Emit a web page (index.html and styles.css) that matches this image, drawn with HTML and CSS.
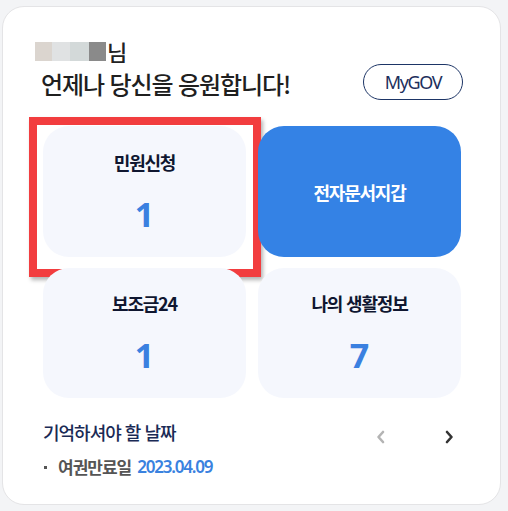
FILE: index.html
```html
<!DOCTYPE html>
<html lang="ko">
<head>
<meta charset="utf-8">
<link rel="stylesheet" href="styles.css">
</head>
<body>
<div class="card">
  <div class="name-row">
    <span class="blur b1"></span><span class="blur b2"></span><span class="blur b3"></span><span class="blur b4"></span><span class="nim">님</span>
  </div>
  <div class="title-row">
    <h2 class="title">언제나 당신을 응원합니다!</h2>
    <a class="mygov">MyGOV</a>
  </div>
  <div class="grid">
    <div class="tile light highlight-wrap">
      <div class="label">민원신청</div>
      <div class="num">1</div>
      <div class="highlight"></div>
    </div>
    <div class="tile blue">
      <div class="label">전자문서지갑</div>
    </div>
    <div class="tile light">
      <div class="label">보조금24</div>
      <div class="num">1</div>
    </div>
    <div class="tile light">
      <div class="label">나의 생활정보</div>
      <div class="num">7</div>
    </div>
  </div>
  <div class="dates">
    <div class="dates-text">
      <div class="dates-title">기억하셔야 할 날짜</div>
      <div class="date-item"><span class="dot"></span><span class="date-label">여권만료일</span><span class="date-val">2023.04.09</span></div>
    </div>
    <div class="arrows">
      <svg class="arrow prev" width="12" height="14" viewBox="0 0 12 14"><path d="M8 2 L3.5 7 L8 12" fill="none" stroke="#b4b4b4" stroke-width="2.6" stroke-linecap="round" stroke-linejoin="round"/></svg>
      <svg class="arrow next" width="12" height="14" viewBox="0 0 12 14"><path d="M4 2 L8.5 7 L4 12" fill="none" stroke="#333" stroke-width="2.6" stroke-linecap="round" stroke-linejoin="round"/></svg>
    </div>
  </div>
</div>
</body>
</html>
```

FILE: styles.css
```css
* { box-sizing: border-box; margin: 0; padding: 0; }
html, body { background: #f3f4f6; }
body {
  font-family: "Noto Sans CJK KR", "Noto Sans", sans-serif;
  padding: 6px 0 0 2px;
  width: 508px;
  height: 511px;
  overflow: hidden;
}
.card {
  width: 499px;
  height: 499px;
  background: #fff;
  border: 1px solid #e4e4e6;
  border-radius: 22px;
  padding: 34px 39px 0 40px;
}
.name-row {
  display: flex;
  align-items: center;
  height: 20px;
  margin-left: -8px;
}
.blur { display: inline-block; width: 17px; height: 19px; }
.b1 { background: #dbd5cf; }
.b2 { background: #e0e2e3; width: 18px; }
.b3 { background: #d3d9d9; width: 19px; }
.b4 { background: #8a8a8a; }
.nim {
  font-size: 22px;
  color: #222;
  margin-left: 1px;
  font-weight: 500;
  line-height: 20px;
}
.title-row {
  display: flex;
  justify-content: space-between;
  align-items: center;
  margin-top: 3px;
  height: 36px;
}
.title {
  font-size: 24px;
  font-weight: 500;
  color: #1f1f1f;
  letter-spacing: -1.1px;
  margin-left: -2px;
  margin-top: 2px;
}
.mygov {
  width: 100px;
  height: 36px;
  border: 1.3px solid #1d3566;
  border-radius: 18px;
  display: flex;
  align-items: center;
  justify-content: center;
  font-family: "Noto Sans", sans-serif;
  font-size: 18px;
  color: #1d2f5c;
  letter-spacing: -1.4px;
  margin-right: -2px;
}
.grid {
  display: grid;
  grid-template-columns: 203px 203px;
  grid-template-rows: 131px 130px;
  column-gap: 12px;
  row-gap: 11px;
  margin-top: 26px;
}
.tile {
  border-radius: 26px;
  display: flex;
  flex-direction: column;
  align-items: center;
  justify-content: center;
  position: relative;
}
.light { background: #f5f7fd; }
.blue { background: #3482e5; }
.label {
  font-size: 18px;
  font-weight: 700;
  color: #0f1630;
  letter-spacing: -1.2px;
  line-height: 20px;
}
.blue .label { color: #fff; }
.num {
  font-family: "Noto Sans", sans-serif;
  font-size: 34px;
  font-weight: 700;
  color: #3a80e0;
  line-height: 36px;
  margin-top: 24px;
}
.highlight {
  position: absolute;
  left: -14px;
  top: -9px;
  width: 232px;
  height: 160px;
  border: 8px solid #f23d3f;
  box-shadow: 2px 3px 4px rgba(0,0,0,0.3);
  pointer-events: none;
}
.dates {
  display: flex;
  justify-content: space-between;
  align-items: flex-start;
  margin-top: 22px;
}
.dates-title {
  font-size: 18px;
  font-weight: 500;
  color: #1a2a55;
  letter-spacing: -1px;
  line-height: 24px;
}
.date-item {
  display: flex;
  align-items: center;
  margin-top: 11px;
  line-height: 24px;
}
.dot {
  width: 3px;
  height: 3px;
  background: #555;
  margin: 0 11px 0 1px;
}
.date-label {
  font-size: 17px;
  font-weight: 700;
  color: #555;
  letter-spacing: -1px;
  margin-right: 6px;
}
.date-val {
  font-family: "Noto Sans", sans-serif;
  font-size: 17px;
  font-weight: 600;
  color: #3a82df;
  letter-spacing: -1.2px;
}
.arrows {
  display: flex;
  gap: 56px;
  margin-top: 10px;
  margin-right: 6px;
}
.arrow { display: block; }
```
